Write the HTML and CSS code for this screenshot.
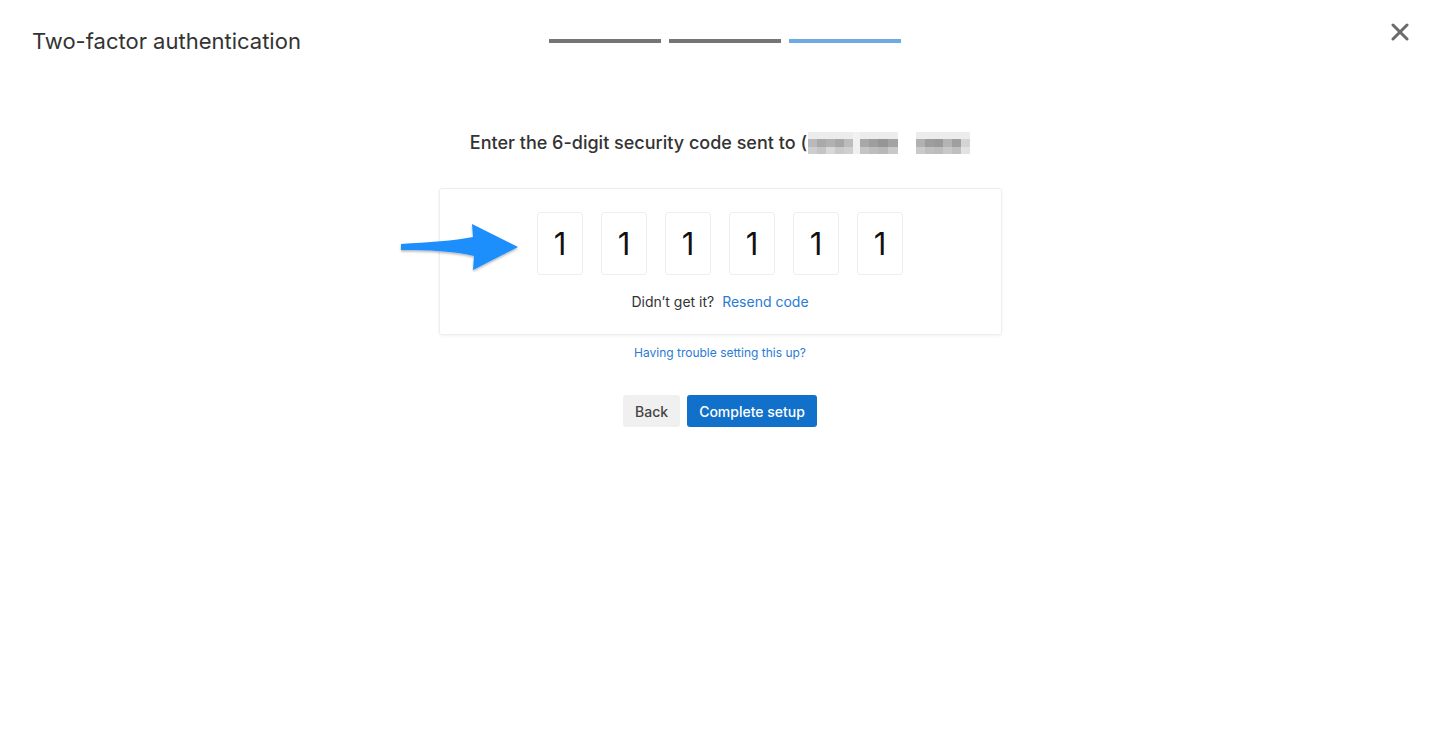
FILE: index.html
```html
<!DOCTYPE html>
<html lang="en">
<head>
    <meta charset="UTF-8">
    <meta name="viewport" content="width=device-width, initial-scale=1.0">
    <title>Two-factor authentication</title>
    <link rel="stylesheet" href="styles.css">
</head>
<body>
    <header class="top-bar">
        <h1 class="title">Two-factor authentication</h1>
        <div class="steps">
            <span class="step done"></span>
            <span class="step done"></span>
            <span class="step current"></span>
        </div>
        <button class="close" aria-label="Close">
            <svg width="18" height="18" viewBox="0 0 18 18">
                <path d="M2 2 L16 16 M16 2 L2 16" stroke="#6b6b6b" stroke-width="3" stroke-linecap="round"/>
            </svg>
        </button>
    </header>

    <main class="content">
        <h2 class="prompt">Enter the 6-digit security code sent to <span class="blurred">(<svg width="162" height="22" viewBox="0 0 162 22">
            <!-- pixelated phone number -->
            <g>
                <rect x="0" y="0" width="45" height="7" fill="#ececec"/>
                <rect x="0" y="7" width="9" height="8" fill="#b9b9b9"/>
                <rect x="9" y="7" width="9" height="8" fill="#a9a9a9"/>
                <rect x="18" y="7" width="9" height="8" fill="#b1b1b1"/>
                <rect x="27" y="7" width="9" height="8" fill="#a7a7a7"/>
                <rect x="36" y="7" width="9" height="8" fill="#bcbcbc"/>
                <rect x="0" y="15" width="9" height="7" fill="#cdcdcd"/>
                <rect x="9" y="15" width="9" height="7" fill="#c4c4c4"/>
                <rect x="18" y="15" width="9" height="7" fill="#d8d8d8"/>
                <rect x="27" y="15" width="9" height="7" fill="#c9c9c9"/>
                <rect x="36" y="15" width="9" height="7" fill="#cfcfcf"/>
                <rect x="45" y="0" width="7" height="22" fill="#f1f1f1"/>

                <rect x="52" y="0" width="38" height="7" fill="#ececec"/>
                <rect x="52" y="7" width="9" height="8" fill="#a8a8a8"/>
                <rect x="61" y="7" width="9" height="8" fill="#9e9e9e"/>
                <rect x="70" y="7" width="10" height="8" fill="#959595"/>
                <rect x="80" y="7" width="10" height="8" fill="#a3a3a3"/>
                <rect x="52" y="15" width="9" height="7" fill="#c4c4c4"/>
                <rect x="61" y="15" width="9" height="7" fill="#bdbdbd"/>
                <rect x="70" y="15" width="10" height="7" fill="#b8b8b8"/>
                <rect x="80" y="15" width="10" height="7" fill="#c9c9c9"/>

                <rect x="108" y="0" width="54" height="7" fill="#ececec"/>
                <rect x="108" y="7" width="9" height="8" fill="#b1b1b1"/>
                <rect x="117" y="7" width="9" height="8" fill="#9d9d9d"/>
                <rect x="126" y="7" width="9" height="8" fill="#9a9a9a"/>
                <rect x="135" y="7" width="9" height="8" fill="#b4b4b4"/>
                <rect x="144" y="7" width="9" height="8" fill="#9f9f9f"/>
                <rect x="153" y="7" width="9" height="8" fill="#d4d4d4"/>
                <rect x="108" y="15" width="9" height="7" fill="#cacaca"/>
                <rect x="117" y="15" width="9" height="7" fill="#c0c0c0"/>
                <rect x="126" y="15" width="9" height="7" fill="#bcbcbc"/>
                <rect x="135" y="15" width="9" height="7" fill="#c8c8c8"/>
                <rect x="144" y="15" width="9" height="7" fill="#bfbfbf"/>
                <rect x="153" y="15" width="9" height="7" fill="#e2e2e2"/>
            </g>
        </svg></span></h2>

        <div class="card">
            <svg class="pointer" width="124" height="52" viewBox="0 0 124 52">
                <defs>
                    <filter id="shade" x="-10%" y="-20%" width="120%" height="150%">
                        <feDropShadow dx="0" dy="1.5" stdDeviation="1.2" flood-color="#000" flood-opacity="0.3"/>
                    </filter>
                </defs>
                <path d="M2 24 C30 22 55 21 74 17 L73 4 L119 27 L74 50 L75 36 C55 31 30 30 2 30 Z" fill="#1e8ffc" filter="url(#shade)"/>
            </svg>
            <div class="digits">
                <input class="digit" type="text" value="1" maxlength="1">
                <input class="digit" type="text" value="1" maxlength="1">
                <input class="digit" type="text" value="1" maxlength="1">
                <input class="digit" type="text" value="1" maxlength="1">
                <input class="digit" type="text" value="1" maxlength="1">
                <input class="digit" type="text" value="1" maxlength="1">
            </div>
            <p class="resend">Didn’t get it? <a href="#">Resend code</a></p>
        </div>

        <a class="trouble" href="#">Having trouble setting this up?</a>

        <div class="actions">
            <button class="btn btn-secondary">Back</button>
            <button class="btn btn-primary">Complete setup</button>
        </div>
    </main>
</body>
</html>
```

FILE: styles.css
```css
body {
    margin: 0;
    font-family: 'Inter', 'Helvetica Neue', Arial, sans-serif;
    color: #333;
    background-color: white;
}
.top-bar {
    display: grid;
    grid-template-columns: 1fr auto 1fr;
    align-items: center;
    padding: 27px 29px 0 32px;
}
.title {
    margin: 0;
    font-size: 22px;
    font-weight: 400;
    line-height: 28px;
    color: #333;
    letter-spacing: 0;
}
.steps {
    display: flex;
    gap: 8px;
    margin-left: 6px;
}
.step {
    width: 112px;
    height: 4px;
}
.step.done {
    background-color: #757575;
}
.step.current {
    background-color: #6fabe2;
}
.close {
    justify-self: end;
    background: none;
    border: none;
    padding: 0;
    width: 22px;
    height: 22px;
    display: flex;
    align-items: center;
    justify-content: center;
    margin-top: -18px;
    cursor: pointer;
}
.content {
    display: flex;
    flex-direction: column;
    align-items: center;
    padding-top: 76px;
}
.prompt {
    margin: 0;
    font-size: 18px;
    font-weight: 500;
    line-height: 24px;
    color: #333;
    letter-spacing: 0;
    display: flex;
    align-items: center;
}
.blurred {
    display: inline-flex;
    align-items: center;
    margin-left: 5px;
    color: #333;
}
.blurred svg {
    margin-left: 1px;
    display: block;
}
.card {
    position: relative;
    margin-top: 33px;
    width: 561px;
    padding: 23px 0 22px;
    border: 1px solid #eeeeee;
    border-radius: 3px;
    box-shadow: 0 1px 3px rgba(0,0,0,0.06);
    display: flex;
    flex-direction: column;
    align-items: center;
}
.pointer {
    position: absolute;
    left: -41px;
    top: 31px;
}
.digits {
    display: flex;
    gap: 18px;
}
.digit {
    width: 46px;
    height: 63px;
    box-sizing: border-box;
    border: 1.5px solid #eeeeee;
    border-radius: 3px;
    text-align: center;
    font-family: 'Inter', 'Helvetica Neue', Arial, sans-serif;
    font-size: 31px;
    color: #111;
    padding: 0;
    outline: none;
}
.resend {
    margin: 17px 0 0;
    font-size: 14px;
    line-height: 20px;
    color: #333;
}
.resend a {
    color: #2a7bd3;
    text-decoration: none;
    margin-left: 4px;
}
.trouble {
    margin-top: 10px;
    font-size: 12px;
    line-height: 16px;
    color: #2a7bd3;
    text-decoration: none;
}
.actions {
    margin-top: 34px;
    display: flex;
    gap: 7px;
}
.btn {
    height: 32px;
    border: none;
    border-radius: 3px;
    padding: 0 12px;
    font-family: 'Inter', 'Helvetica Neue', Arial, sans-serif;
    font-size: 14px;
    font-weight: 500;
    cursor: pointer;
}
.btn-secondary {
    background-color: #f0f0f0;
    color: #444;
}
.btn-primary {
    background-color: #1170c9;
    color: white;
}
```
